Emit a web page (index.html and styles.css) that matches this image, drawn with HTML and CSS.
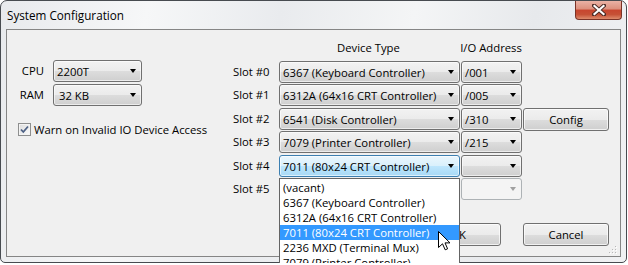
FILE: index.html
```html
<!DOCTYPE html>
<html lang="en">
  <head>
    <meta charset="UTF-8" />
    <title>System Configuration</title>
    <link rel="stylesheet" href="styles.css">
  </head>
  <body>
    <div class="window">
      <div class="titlebar">
        <span class="title">System Configuration</span>
        <div class="close-btn">
          <svg width="14" height="12" viewBox="0 0 14 12">
            <path d="M2 1.5 L12 10.5 M12 1.5 L2 10.5" stroke="#4a2a24" stroke-width="4" stroke-linecap="square" fill="none" />
            <path d="M2.5 2 L11.5 10 M11.5 2 L2.5 10" stroke="#fff" stroke-width="2.2" stroke-linecap="square" fill="none" />
          </svg>
        </div>
      </div>

      <div class="client">
        <div class="top">
          <div class="left-panel">
            <div class="mem-grid">
              <span class="lbl">CPU</span>
              <div class="combo cpu"><span class="val">2200T</span><i class="arrow"></i></div>
              <span class="lbl">RAM</span>
              <div class="combo ram"><span class="val">32 KB</span><i class="arrow"></i></div>
            </div>
            <div class="check">
              <span class="box">
                <svg width="11" height="11" viewBox="0 0 11 11">
                  <path d="M2 5.5 L4.3 8 L9 2.5" stroke="#4d6185" stroke-width="1.8" fill="none" />
                </svg>
              </span>
              <span>Warn on Invalid IO Device Access</span>
            </div>
          </div>

          <div class="slots">
            <span></span>
            <span class="head head-dev">Device Type</span>
            <span class="head head-io">I/O Address</span>
            <span></span>

            <span class="lbl">Slot #0</span>
            <div class="combo dev"><span class="val">6367 (Keyboard Controller)</span><i class="arrow"></i></div>
            <div class="combo io"><span class="val">/001</span><i class="arrow"></i></div>
            <span></span>

            <span class="lbl">Slot #1</span>
            <div class="combo dev"><span class="val">6312A (64x16 CRT Controller)</span><i class="arrow"></i></div>
            <div class="combo io"><span class="val">/005</span><i class="arrow"></i></div>
            <span></span>

            <span class="lbl">Slot #2</span>
            <div class="combo dev"><span class="val">6541 (Disk Controller)</span><i class="arrow"></i></div>
            <div class="combo io"><span class="val">/310</span><i class="arrow"></i></div>
            <div class="btn">Config</div>

            <span class="lbl">Slot #3</span>
            <div class="combo dev"><span class="val">7079 (Printer Controller)</span><i class="arrow"></i></div>
            <div class="combo io"><span class="val">/215</span><i class="arrow"></i></div>
            <span></span>

            <span class="lbl">Slot #4</span>
            <div class="combo dev open"><span class="val">7011 (80x24 CRT Controller)</span><i class="arrow"></i></div>
            <div class="combo io"><span class="val"></span><i class="arrow"></i></div>
            <span></span>

            <span class="lbl">Slot #5</span>
            <span></span>
            <div class="combo io disabled"><span class="val"></span><i class="arrow"></i></div>
            <span></span>
          </div>
        </div>

        <div class="buttons">
          <div class="btn">OK</div>
          <div class="btn">Cancel</div>
        </div>

        <svg class="grip" width="9" height="9" viewBox="0 0 9 9">
          <rect x="7" y="1" width="1" height="1" fill="#b8b8b8" />
          <rect x="4" y="4" width="1" height="1" fill="#b8b8b8" />
          <rect x="7" y="4" width="1" height="1" fill="#b8b8b8" />
          <rect x="1" y="7" width="1" height="1" fill="#b8b8b8" />
          <rect x="4" y="7" width="1" height="1" fill="#b8b8b8" />
          <rect x="7" y="7" width="1" height="1" fill="#b8b8b8" />
          <rect x="8" y="2" width="1" height="1" fill="#fff" />
          <rect x="5" y="5" width="1" height="1" fill="#fff" />
          <rect x="8" y="5" width="1" height="1" fill="#fff" />
          <rect x="2" y="8" width="1" height="1" fill="#fff" />
          <rect x="5" y="8" width="1" height="1" fill="#fff" />
          <rect x="8" y="8" width="1" height="1" fill="#fff" />
        </svg>
      </div>

      <!-- open list of the Slot #4 combo -->
      <ul class="droplist">
        <li>(vacant)</li>
        <li>6367 (Keyboard Controller)</li>
        <li>6312A (64x16 CRT Controller)</li>
        <li class="sel">7011 (80x24 CRT Controller)</li>
        <li>2236 MXD (Terminal Mux)</li>
        <li>7079 (Printer Controller)</li>
      </ul>

      <svg class="cursor" width="13" height="20" viewBox="0 0 13 20">
        <path d="M0.5 0.5 L0.5 16.5 L4.5 12.8 L7.2 18.8 L9.6 17.8 L7 11.9 L12 11.9 Z" fill="#fff" stroke="#000" stroke-width="1" stroke-linejoin="miter" />
      </svg>
    </div>
  </body>
</html>
```

FILE: styles.css
```css
* {
  margin: 0;
  padding: 0;
  box-sizing: border-box;
}
body {
  background-color: #fff;
  font-family: "Open Sans", "Noto Sans", sans-serif;
  font-size: 11.3px;
  color: #000;
}
.window {
  position: relative;
  width: 627px;
  height: 263px;
  border: 1px solid #474b50;
  border-radius: 7px 7px 5px 5px;
  background: linear-gradient(100deg, #e8eaed 0%, #f6f7f8 22%, #e9ebee 42%, #f4f5f6 62%, #e7e9ec 80%, #f0f1f3 100%);
  padding: 0 5px 5px 5px;
  display: flex;
  flex-direction: column;
}
.titlebar {
  height: 28px;
  display: flex;
  align-items: flex-start;
}
.title {
  padding: 6px 0 0 1px;
  line-height: 16px;
  font-size: 11.7px;
}
.close-btn {
  margin-left: auto;
  width: 47px;
  height: 19px;
  border: 1px solid #7a3327;
  border-top: none;
  border-radius: 0 0 4px 4px;
  background: linear-gradient(#eab2a5 0%, #dc8f7c 45%, #c8452e 50%, #c65136 75%, #dd8b6c 100%);
  display: flex;
  align-items: center;
  justify-content: center;
  margin-right: -1px;
}
.client {
  position: relative;
  flex: 1;
  border: 1px solid #858585;
  background-color: #f0f0f0;
  display: flex;
  flex-direction: column;
}
.top {
  display: flex;
  margin-top: 10px;
}
.left-panel {
  width: 226px;
  padding: 20px 0 0 11px;
}
.mem-grid {
  display: grid;
  grid-template-columns: 26px 89px;
  column-gap: 9px;
  row-gap: 2px;
}
.mem-grid .lbl {
  text-align: right;
  line-height: 22px;
}
.check {
  margin-top: 16px;
  display: flex;
  align-items: center;
  gap: 3px;
  line-height: 15px;
  height: 15px;
}
.box {
  width: 13px;
  height: 13px;
  border: 1px solid #8e8f8f;
  background: linear-gradient(135deg, #dcdcdc, #fcfcfc);
  display: flex;
  align-items: center;
  justify-content: center;
  box-shadow: inset 0 0 0 1px #f4f4f4;
}
.slots {
  display: grid;
  grid-template-columns: 46px 182px 62px 86px;
  grid-template-rows: 21px 23px 24px 23px 24px 23px 23px;
  align-items: start;
}
.head {
  line-height: 15px;
  white-space: nowrap;
}
.head-dev {
  padding-left: 58px;
}
.head-io {
  justify-self: center;
  margin-left: -2px;
}
.slots .lbl {
  line-height: 22px;
}
.combo {
  position: relative;
  height: 22px;
  border: 1px solid #707070;
  border-radius: 3px;
  background: linear-gradient(#f2f2f2 0%, #ebebeb 50%, #dddddd 50%, #cfcfcf 100%);
  box-shadow: inset 0 0 0 1px rgba(255, 255, 255, 0.6);
  display: flex;
  align-items: center;
  white-space: nowrap;
}
.combo .val {
  padding-left: 3px;
  line-height: 15px;
}
.cpu .val {
  padding-left: 3px;
}
.ram .val {
  padding-left: 5px;
}
.arrow {
  position: absolute;
  right: 5px;
  top: 8px;
  width: 0;
  height: 0;
  border-left: 3.5px solid transparent;
  border-right: 3.5px solid transparent;
  border-top: 4px solid #000;
}
.dev {
  width: 181px;
}
.io {
  width: 61px;
}
.combo.open {
  border-color: #3c7fb1;
  background: linear-gradient(#eaf6fd 0%, #d9f0fc 50%, #bee6fd 50%, #a7d9f5 100%);
}
.combo.disabled {
  border-color: #adb2b5;
  background: #f4f4f4;
  box-shadow: none;
}
.combo.disabled .arrow {
  border-top-color: #a0a0a0;
}
.btn {
  width: 86px;
  height: 23px;
  border: 1px solid #707070;
  border-radius: 3px;
  background: linear-gradient(#f2f2f2 0%, #ebebeb 50%, #dddddd 50%, #cfcfcf 100%);
  box-shadow: inset 0 0 0 1px rgba(255, 255, 255, 0.7);
  display: flex;
  align-items: center;
  justify-content: center;
}
.buttons {
  margin-top: auto;
  display: flex;
  justify-content: flex-end;
  gap: 22px;
  padding: 0 11px 10px 0;
}
.grip {
  position: absolute;
  right: 3px;
  bottom: 2px;
}
.droplist {
  position: absolute;
  left: 278px;
  top: 177px;
  width: 181px;
  height: 95px;
  list-style: none;
  background-color: #fff;
  border: 1px solid #646464;
  padding-top: 1px;
  overflow: hidden;
}
.droplist li {
  height: 15px;
  line-height: 15px;
  padding-left: 3px;
  white-space: nowrap;
}
.droplist li.sel {
  background-color: #3399ff;
  color: #fff;
}
.cursor {
  position: absolute;
  left: 437px;
  top: 230px;
}
```
